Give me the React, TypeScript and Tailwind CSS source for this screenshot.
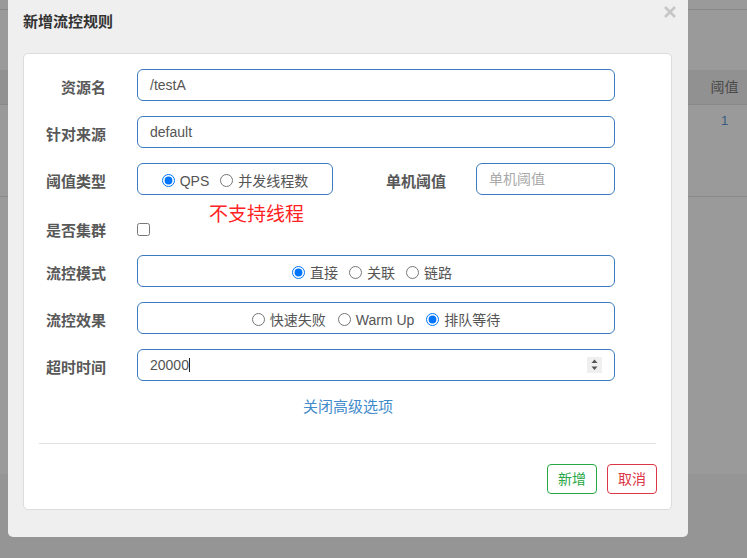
import React from "react";

const Radio = ({ checked }: { checked?: boolean }) => (
  <input type="radio" checked={!!checked} readOnly className="m-0 h-[13px] w-[13px] shrink-0" />
);

const RadioItem = ({ label, checked }: { label: string; checked?: boolean }) => (
  <div className="flex items-center gap-[5px]">
    <Radio checked={checked} />
    <span className="text-[14px] text-[#555] leading-[20px] mt-[2px]">{label}</span>
  </div>
);

const Label = ({ children }: { children: React.ReactNode }) => (
  <div className="w-[82px] shrink-0 mt-[6px] text-right text-[15px] font-bold text-[#585858] leading-[20px]">{children}</div>
);

const boxCls = "h-[32px] border border-[#3b7bbf] rounded-[6px] bg-white";

export default function App() {
  return (
    <div className="relative w-[747px] h-[558px] overflow-hidden flex flex-col bg-[#9a9a9a] font-['Liberation_Sans','Noto_Sans_CJK_SC',sans-serif]">
      {/* background page */}
      <div className="h-[9px]" />
      <div className="h-px bg-[#8a8a8a]" />
      <div className="h-[60px]" />
      <div className="h-[34px] bg-[#919191] flex justify-end">
        <div className="w-[45px] text-center text-[14px] leading-[34px] text-[#4a4a4a]">阈值</div>
      </div>
      <div className="h-px bg-[#8a8a8a]" />
      <div className="h-[91px] flex justify-end">
        <div className="w-[45px] text-center text-[13px] leading-[20px] pt-[6px] text-[#355a80]">1</div>
      </div>
      <div className="h-px bg-[#8a8a8a]" />
      <div className="h-[277px]" />
      <div className="flex-1 bg-[#959595]" />

      {/* modal dialog */}
      <div className="absolute left-[8px] top-0 w-[680px] h-[537px] bg-[#efefef] rounded-b-[5px] flex flex-col">
        <svg className="absolute left-[656px] top-[6px]" width="12" height="12" viewBox="0 0 12 12">
          <path d="M1 1 L11 11 M11 1 L1 11" stroke="#c6c6c6" strokeWidth="2.6" strokeLinecap="butt" />
        </svg>
        <div className="pt-[12px] px-[15px] h-[32px] text-[15px] font-bold text-[#333] leading-[20px]">新增流控规则</div>
        <div className="relative mt-[21px] ml-[15px] w-[649px] h-[457px] bg-white border border-[#dcdcdc] rounded-[5px] flex flex-col pt-[15px]">
          {/* row 1 */}
          <div className="flex items-center gap-[31px]">
            <Label>资源名</Label>
            <div className={`${boxCls} w-[478px] flex items-center pl-[12px] text-[14px] text-[#555]`}>/testA</div>
          </div>
          {/* row 2 */}
          <div className="flex items-center gap-[31px] mt-[15px]">
            <Label>针对来源</Label>
            <div className={`${boxCls} w-[478px] flex items-center pl-[12px] text-[14px] text-[#555]`}>default</div>
          </div>
          {/* row 3 */}
          <div className="flex items-center mt-[15px]">
            <Label>阈值类型</Label>
            <div className={`${boxCls} ml-[31px] w-[196px] flex items-center justify-center gap-[11px] pt-[2px]`}>
              <RadioItem label="QPS" checked />
              <RadioItem label="并发线程数" />
            </div>
            <div className="w-[113px] mt-[5px] text-right text-[15px] font-bold text-[#585858] leading-[20px]">单机阈值</div>
            <div className={`${boxCls} ml-[30px] w-[139px] flex items-center pl-[12px] text-[14px] text-[#a9a9a9]`}>单机阈值</div>
          </div>
          {/* row 4 */}
          <div className="flex items-center gap-[31px] mt-[17px] h-[32px]">
            <Label>是否集群</Label>
            <input type="checkbox" readOnly className="m-0 mt-[2px] h-[13px] w-[13px]" />
          </div>
          {/* row 5 */}
          <div className="flex items-center gap-[31px] mt-[11px]">
            <Label>流控模式</Label>
            <div className={`${boxCls} w-[478px] flex items-center justify-center gap-[11px] pr-[8px] pt-[2px]`}>
              <RadioItem label="直接" checked />
              <RadioItem label="关联" />
              <RadioItem label="链路" />
            </div>
          </div>
          {/* row 6 */}
          <div className="flex items-center gap-[31px] mt-[15px]">
            <Label>流控效果</Label>
            <div className={`${boxCls} w-[478px] flex items-center justify-center gap-[12px] pt-[2px]`}>
              <RadioItem label="快速失败" />
              <RadioItem label="Warm Up" />
              <RadioItem label="排队等待" checked />
            </div>
          </div>
          {/* row 7 */}
          <div className="flex items-center gap-[31px] mt-[15px]">
            <Label>超时时间</Label>
            <div className={`${boxCls} relative w-[478px] flex items-center pl-[12px] text-[14px] text-[#555]`}>
              <span>20000</span>
              <span className="w-px h-[14px] bg-[#222]" />
              <svg className="absolute right-[12px] top-[7px]" width="15" height="16" viewBox="0 0 15 16">
                <rect width="15" height="16" fill="#efefef" />
                <path d="M4.5 6 L10.5 6 L7.5 2.5 Z" fill="#555" />
                <path d="M4.5 9.5 L10.5 9.5 L7.5 13 Z" fill="#555" />
              </svg>
            </div>
          </div>
          {/* link */}
          <div className="mt-[16px] text-center text-[15px] leading-[20px] text-[#428bca] pl-[1px]">关闭高级选项</div>
          {/* hr */}
          <div className="mt-[26px] mx-[15px] h-px bg-[#e2e2e2]" />
          {/* buttons */}
          <div className="mt-[20px] pr-[14px] flex justify-end gap-[10px]">
            <div className="w-[50px] h-[30px] border border-[#28a745] rounded-[4px] flex items-center justify-center text-[14px] text-[#28a745]">新增</div>
            <div className="w-[50px] h-[30px] border border-[#dc3545] rounded-[4px] flex items-center justify-center text-[14px] text-[#dc3545]">取消</div>
          </div>

          {/* annotation */}
          <div className="absolute left-[185px] top-[151px] text-[19px] leading-[19px] text-[#ff2222]">不支持线程</div>
        </div>
      </div>
    </div>
  );
}
